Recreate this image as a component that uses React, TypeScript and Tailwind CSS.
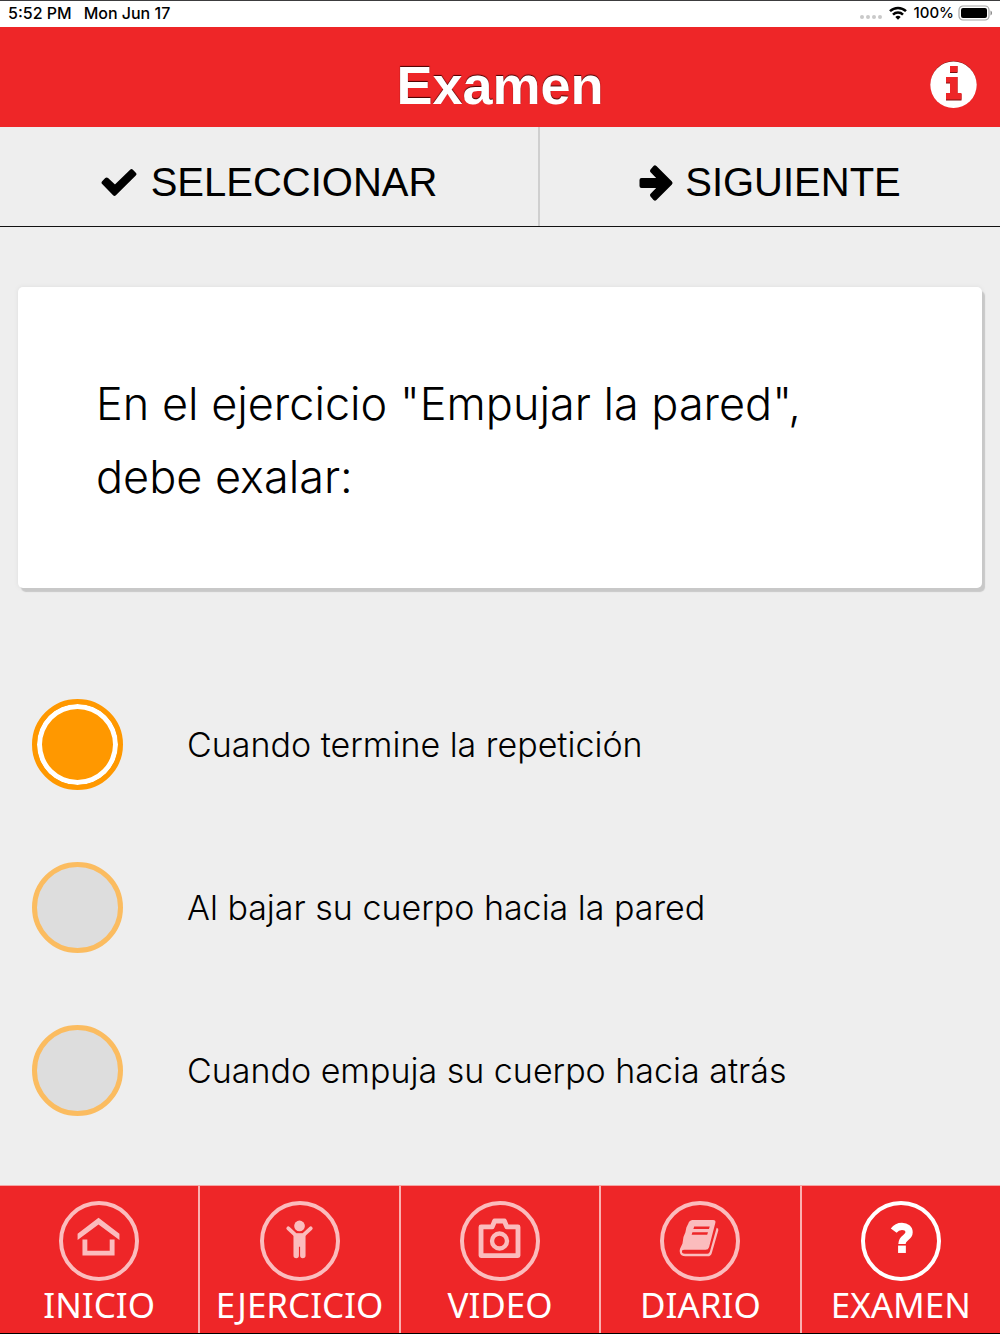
import { useState } from 'react';
import type { ReactNode } from 'react';

const options = [
  'Cuando termine la repetición',
  'Al bajar su cuerpo hacia la pared',
  'Cuando empuja su cuerpo hacia atrás',
];

function StatusBar() {
  return (
    <div className="flex h-[27px] items-center justify-between border-t border-[#3c3c3e] bg-white pb-0.5 pl-2 pr-[7px] font-['Inter',sans-serif] font-medium text-black">
      <div className="flex gap-3 text-base">
        <span>5:52 PM</span>
        <span>Mon Jun 17</span>
      </div>
      <div className="flex items-center gap-[7px] text-[15px]">
        <svg width="22" height="12" viewBox="0 0 22 12" fill="#c9c9c9" aria-hidden="true">
          <circle cx="2" cy="10" r="2" />
          <circle cx="8" cy="10" r="2" />
          <circle cx="14" cy="10" r="2" />
          <circle cx="20" cy="10" r="2" />
        </svg>
        <svg width="18" height="14" viewBox="0 0 18 14" fill="none" stroke="#000" strokeWidth="2.5" aria-hidden="true">
          <path d="M1 5.2a11.6 11.6 0 0 1 16 0" />
          <path d="M4 8.6a7.2 7.2 0 0 1 10 0" />
          <path d="M9 13.8 6.3 11a4 4 0 0 1 5.4 0z" fill="#000" stroke="none" />
        </svg>
        <span>100%</span>
        <svg className="-ml-1" width="36" height="16" viewBox="0 0 36 16" aria-hidden="true">
          <rect x="2" y="1" width="30" height="14" rx="4" fill="none" stroke="#a5a5a5" strokeWidth="1.2" />
          <rect x="4" y="3" width="26" height="10" rx="2" />
          <path d="M33.5 5.5c2 .8 2 4.2 0 5z" fill="#8a8a8a" />
        </svg>
      </div>
    </div>
  );
}

function InfoIcon() {
  return (
    <svg className="size-12" viewBox="0 0 48 48" aria-hidden="true">
      <circle cx="24.5" cy="22.8" r="22.8" fill="#7a1010" />
      <circle cx="24.5" cy="23.8" r="23.2" fill="#fff" />
      <path d="M21 5h7.5v7H21zM17 16h11.5v17h4v6.5H17V33h4V22.5h-4z" fill="#7a1010" />
      <path d="M21 5h7.5v6H21zM17 16h11.5v16h4v6.5H17V32h4V21.5h-4z" fill="#ee2628" />
    </svg>
  );
}

function CheckIcon() {
  return (
    <svg className="size-[42px]" viewBox="0 0 42 42" fill="currentColor" stroke="currentColor" strokeWidth="4" strokeLinejoin="round" aria-hidden="true">
      <path d="M2.6 21.7 5.7 18.5 14 26.2 30.5 10.2 33.4 13.1 13.5 32.8z" />
    </svg>
  );
}

function ArrowIcon() {
  return (
    <svg className="size-[42px]" viewBox="0 0 42 42" fill="currentColor" stroke="currentColor" strokeWidth="4" strokeLinejoin="round" aria-hidden="true">
      <path d="M2.5 19h19.5L13 9.8l3-3.400 15.500 15.600L16 37.600l-3-3.400 9-9.200H2.500z" />
    </svg>
  );
}

function HomeIcon() {
  return (
    <svg className="size-[74px]" viewBox="0 0 74 74" fill="none" stroke="currentColor" strokeWidth="5" aria-hidden="true">
      <path d="M36.5 13 58 29.5V36L36.5 20 15 36v-6.5z" fill="currentColor" stroke="none" />
      <path d="M22.5 35.5v14h28v-14" />
    </svg>
  );
}

function ChildIcon() {
  return (
    <svg className="size-[74px]" viewBox="0 0 74 74" fill="currentColor" aria-hidden="true">
      <circle cx="36.5" cy="21.5" r="5.5" />
      <path d="M25 24l7.5 7h8l7.5-7" fill="none" stroke="currentColor" strokeWidth="4" strokeLinecap="round" strokeLinejoin="round" />
      <path d="M30.3 29.5h12.4V52a2.8 2.8 0 0 1-5.6 0V43h-1.2v9a2.8 2.8 0 0 1-5.6 0z" />
    </svg>
  );
}

function CameraIcon() {
  return (
    <svg className="size-[74px]" viewBox="0 0 74 74" fill="none" stroke="currentColor" strokeWidth="5" strokeLinejoin="round" aria-hidden="true">
      <path d="M17.5 22.5H29l2.5-6h10l2.5 6h11.500V52h-38z" />
      <circle cx="36.5" cy="37" r="7.7" strokeWidth="4.5" />
    </svg>
  );
}

function BookIcon() {
  return (
    <svg className="size-[74px]" viewBox="0 0 74 74" aria-hidden="true">
      <path d="M29 15.3h21.5q3 0 2.3 3l-6.500 25q-.8 2.700-3.600 2.700H21q-2.200 0-2.500 1-.6 3 3 3h23.200q1.700 0 2.400-2l7-24.500q2.300.5 1.700 2.700l-6.800 23.600q-1 2.900-4 2.900H22q-5 0-5.800-4.500-.2-1.500.3-3.200l2.500-5.500 1-6.500 2-5 1-5 2-4q.7-3.200 4-3.700z" fill="currentColor" />
      <path d="M31 22h16l-.8 2.700H30.200zM29.200 28h16l-.8 2.700H28.400z" fill="#ee2628" />
    </svg>
  );
}

function QuestionIcon() {
  return (
    <svg className="size-[74px]" viewBox="0 0 74 74" fill="none" stroke="currentColor" strokeWidth="7.5" aria-hidden="true">
      <path d="M29.5 26.3C32 23 35 22 38 22c4.5 0 7.3 2.5 7.3 6 0 6-7.3 5-7.3 12" />
      <path d="M34 41.700h8v7.600h-8z" fill="currentColor" stroke="none" />
    </svg>
  );
}

const tabs: { label: string; icon: ReactNode; active?: boolean }[] = [
  { label: 'INICIO', icon: <HomeIcon /> },
  { label: 'EJERCICIO', icon: <ChildIcon /> },
  { label: 'VIDEO', icon: <CameraIcon /> },
  { label: 'DIARIO', icon: <BookIcon /> },
  { label: 'EXAMEN', icon: <QuestionIcon />, active: true },
];

export default function App() {
  const [selected, setSelected] = useState(0);

  return (
    <div className="flex min-h-screen flex-col bg-[#eeeeee] font-['Liberation_Sans',Arial,sans-serif] text-black">
      <StatusBar />

      <header className="grid h-[100px] grid-cols-[1fr_auto_1fr] items-center bg-[#ee2628] px-[23px] pt-4">
        <h1 className="col-start-2 text-[54px] leading-none font-bold text-white [text-shadow:0_-1px_1px_#400]">Examen</h1>
        <button type="button" aria-label="Información" className="justify-self-end">
          <InfoIcon />
        </button>
      </header>

      <div className="flex h-[100px] border-b border-[#111] text-[40px]">
        <button type="button" className="flex w-[54%] items-center justify-center gap-2 border-r-2 border-[#cfcfcf] pt-[11px]">
          <CheckIcon />
          SELECCIONAR
        </button>
        <button type="button" className="flex flex-1 items-center justify-center gap-1 pt-[11px]">
          <ArrowIcon />
          SIGUIENTE
        </button>
      </div>

      <main className="flex-1 font-['Inter',sans-serif] font-light">
        <section className="mx-[18px] mt-[60px] rounded-[5px] bg-white px-[78px] pt-20 pb-[75px] shadow-[3px_4px_1px_#c8c8c8,0_0_4px_#dddddd]">
          <p className="text-[45px] leading-[73px]">
            En el ejercicio "Empujar la pared", debe exalar:
          </p>
        </section>

        <fieldset className="mt-[111px] flex flex-col gap-[72px] px-8">
          {options.map((option, i) => (
            <label key={option} className="flex items-center gap-16 text-[34px] leading-[54px]">
              <input
                type="radio"
                name="answer"
                checked={selected === i}
                onChange={() => setSelected(i)}
                className="size-[91px] shrink-0 appearance-none rounded-full border-5 border-[#fbbc60] bg-[#dddddd] checked:border-[#ff9800] checked:bg-[#ff9800] checked:shadow-[inset_0_0_0_5px_#fff]"
              />
              {option}
            </label>
          ))}
        </fieldset>
      </main>

      <nav className="grid h-[149px] grid-cols-5 gap-[2px] border-t border-b border-t-[#f5a5a5] border-b-black bg-[#fbb0b0] font-['Noto_Sans',sans-serif] text-[35px] leading-[40px] text-white">
        {tabs.map((tab) => (
          <a key={tab.label} href="#" className="flex flex-col items-center bg-[#ee2628] pt-[15px]">
            <span className={`flex size-20 items-center justify-center rounded-full border-4 border-current ${tab.active ? 'text-white' : 'text-[#fbbcbd]'}`}>
              {tab.icon}
            </span>
            <span className="mt-1">{tab.label}</span>
          </a>
        ))}
      </nav>
    </div>
  );
}
